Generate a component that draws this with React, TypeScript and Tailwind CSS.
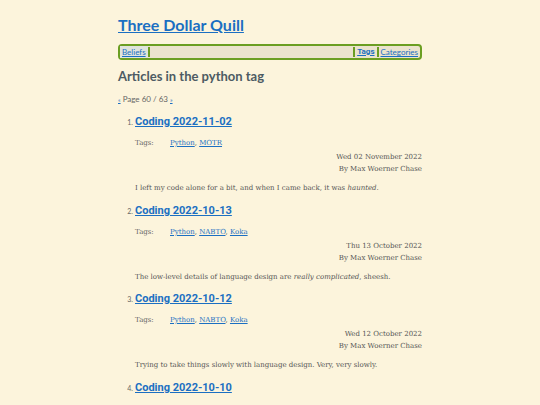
import React from 'react';

const articles = [
  {
    title: 'Coding 2022-11-02',
    tags: ['Python', 'MOTR'],
    date: 'Wed 02 November 2022',
    summary: (
      <>
        I left my code alone for a bit, and when I came back, it was <em>haunted</em>.
      </>
    ),
  },
  {
    title: 'Coding 2022-10-13',
    tags: ['Python', 'NABTO', 'Koka'],
    date: 'Thu 13 October 2022',
    summary: (
      <>
        The low-level details of language design are <em>really complicated</em>, sheesh.
      </>
    ),
  },
  {
    title: 'Coding 2022-10-12',
    tags: ['Python', 'NABTO', 'Koka'],
    date: 'Wed 12 October 2022',
    summary: <>Trying to take things slowly with language design. Very, very slowly.</>,
  },
  {
    title: 'Coding 2022-10-10',
    tags: ['Python'],
    date: 'Mon 10 October 2022',
    summary: <>More language design.</>,
  },
];

const sans = "font-['Lato','Open_Sans',sans-serif]";
const titleFont = "font-['Roboto','Lato',sans-serif]";
const serif = "font-['DejaVu_Serif','Liberation_Serif',serif]";

export default function App() {
  return (
    <div className="min-h-[405px] bg-[#fcf4dc] text-[#555]">
      <div className="w-[304px] mx-auto pt-[14px]">
        <h1 className={`${sans} text-[16px] leading-[22px] font-bold`}>
          <a href="#" className="text-[#1b6fc2] underline">Three Dollar Quill</a>
        </h1>

        <nav className={`${sans} mt-[8px] flex items-center h-[16px] border-2 border-[#6b9e22] rounded-[4px] bg-[#ebe3cd] text-[8px] leading-[12px]`}>
          <a href="#" className="px-[2px] text-[#1b6fc2] underline bg-[#dfe4dc]">Beliefs</a>
          <span className="w-[2px] h-[10px] bg-[#6b9e22]" />
          <span className="flex-1" />
          <span className="w-[2px] h-[10px] bg-[#6b9e22]" />
          <a href="#" className={`${titleFont} px-[2px] text-[#1b6fc2] underline font-bold`}>Tags</a>
          <span className="w-[2px] h-[10px] bg-[#6b9e22]" />
          <a href="#" className="px-[2px] text-[#1b6fc2] underline">Categories</a>
        </nav>

        <h2 className={`${sans} mt-[7px] text-[13px] leading-[18px] font-bold text-[#4d5b63]`}>
          Articles in the python tag
        </h2>

        <p className={`${sans} mt-[9px] text-[8px] leading-[10px] text-[#666]`}>
          <a href="#" className="text-[#1b6fc2] underline text-[6px]">«</a> Page 60 / 63{' '}
          <a href="#" className="text-[#1b6fc2] underline text-[6px]">»</a>
        </p>

        <ol className="mt-[8px] pl-[17px]">
          {articles.map((a, i) => (
            <li key={a.title} className="h-[88.5px]">
              <div className="flex items-baseline">
                <span className={`${sans} w-[9px] -ml-[9px] pr-[2px] text-[7px] text-[#666] text-right`}>{i + 1}.</span>
                <a href="#" className={`${titleFont} text-[11px] leading-[18px] font-bold text-[#1b6fc2] underline`}>
                  {a.title}
                </a>
              </div>
              <div className={`${serif} text-[7px] leading-[12px]`}>
                <div className="mt-[6px] flex">
                  <span className="w-[35px] text-[#666]">Tags:</span>
                  <span>
                    {a.tags.map((t, j) => (
                      <React.Fragment key={t}>
                        {j > 0 && ', '}
                        <a href="#" className="text-[#1b6fc2] underline">{t}</a>
                      </React.Fragment>
                    ))}
                  </span>
                </div>
                <div className="text-right mt-[2px]">{a.date}</div>
                <div className="text-right">By Max Woerner Chase</div>
                <p className="mt-[7px]">{a.summary}</p>
              </div>
            </li>
          ))}
        </ol>
      </div>
    </div>
  );
}
